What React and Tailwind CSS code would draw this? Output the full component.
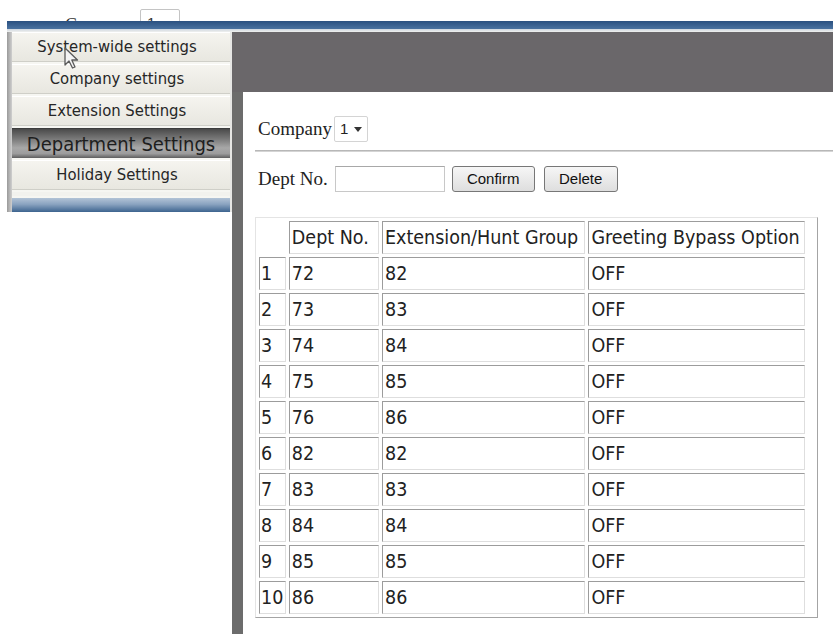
import React from "react";

const menuItems = [
  { label: "System-wide settings" },
  { label: "Company settings" },
  { label: "Extension Settings" },
  { label: "Department Settings", active: true },
  { label: "Holiday Settings" },
];

const rows = [
  [1, 72, 82],
  [2, 73, 83],
  [3, 74, 84],
  [4, 75, 85],
  [5, 76, 86],
  [6, 82, 82],
  [7, 83, 83],
  [8, 84, 84],
  [9, 85, 85],
  [10, 86, 86],
];

const cell =
  "h-[33px] border border-t-[#9c9c9c] border-l-[#9c9c9c] border-r-[#dedede] border-b-[#dedede] pl-[2px] text-left align-middle font-normal whitespace-nowrap";

function Cursor() {
  return (
    <svg
      className="absolute left-[64px] top-[47px]"
      width="17"
      height="23"
      viewBox="0 0 17 23"
    >
      <path
        d="M1 1 L1 18 L5 14 L8.5 21 L11 20 L7.8 13 L13.5 13 Z"
        fill="#f4f4f4"
        stroke="#5a5a5a"
        strokeWidth="1.3"
        strokeLinejoin="round"
      />
    </svg>
  );
}

export default function App() {
  return (
    <div className="relative w-[833px] h-[634px] overflow-hidden bg-white text-[#222]">
      {/* page behind the frame, mostly covered */}
      <div className="h-[21px] overflow-hidden flex items-start">
        <div className="ml-[65px] mt-[15px] font-['Liberation_Serif',serif] text-[18px] leading-[20px] text-[#333]">
          Company
        </div>
        <div className="ml-[5px] mt-[9px] w-[40px] h-[22px] border border-[#c4c4c4] rounded-[2px] pl-[6px] pt-[3px] font-['Liberation_Sans',sans-serif] text-[15px] leading-[20px] text-[#333]">
          1
        </div>
      </div>

      {/* title bar */}
      <div className="ml-[7px] h-[8px] bg-[linear-gradient(to_bottom,#2a5080,#4a72a0)]" />
      <div className="ml-[7px] h-[3px] bg-[linear-gradient(to_bottom,#cdd6e0,#f0f0ee)]" />

      <div className="flex">
        {/* side menu */}
        <div className="ml-[7px] w-[225px] flex flex-col self-start">
          <div className="flex">
            <div className="w-[5px] bg-[linear-gradient(to_right,#9a9a9a,#cfcfcf)]" />
            <div className="w-[218px] flex flex-col gap-[2px] bg-[#f6f6f2] font-['DejaVu_Sans_Condensed','DejaVu_Sans',sans-serif]">
              {menuItems.map((m) =>
                m.active ? (
                  <div
                    key={m.label}
                    className="h-[30px] flex items-center justify-center text-[20px] text-[#1e1e1e] bg-[linear-gradient(to_bottom,#4a4a4a,#7a7a7a_35%,#a8a8a8_65%,#9c9c9c_85%,#5e5e5e)] border-t border-[#3c3c3c]"
                  >
                    {m.label}
                  </div>
                ) : (
                  <div
                    key={m.label}
                    className="h-[30px] flex items-center justify-center pr-[8px] text-[16.5px] text-[#262626] bg-[linear-gradient(to_bottom,#f5f4ef,#e8e7e0)] border-t border-t-white border-b border-b-[#cfcfc8]"
                  >
                    {m.label}
                  </div>
                )
              )}
              <div className="h-[4px] bg-[#f2f2ee]" />
              <div className="h-[14px] bg-[linear-gradient(to_bottom,#b2c3d6,#8aa3c0_45%,#3d648f)]" />
            </div>
            <div className="w-[2px] bg-[#e6e6e4]" />
          </div>
        </div>

        {/* main frame */}
        <div className="flex-1 flex flex-col h-[602px]">
          <div className="h-[60px] bg-[#6a676a]" />
          <div className="flex-1 flex">
            <div className="w-[11px] bg-[#6c6c6c]" />
            <div className="flex-1 pl-[12px] pt-[24px]">
              <div className="flex items-center h-[26px] font-['Liberation_Serif',serif] text-[19px] text-[#222] pl-[3px]">
                <span>Company</span>
                <div className="ml-[2px] flex items-center h-[26px] w-[34px] border border-[#d4d4d4] rounded-[2px] bg-white pl-[5px] gap-[6px] font-['Liberation_Sans',sans-serif] text-[15px]">
                  <span>1</span>
                  <svg width="8" height="5" viewBox="0 0 8 5">
                    <path d="M0 0 L8 0 L4 5 Z" fill="#333" />
                  </svg>
                </div>
              </div>
              <div className="mt-[8px] h-[2px] bg-[linear-gradient(to_bottom,#a9a9a9,#e2e2e2)]" />

              <div className="mt-[13px] flex items-center h-[28px] pl-[3px] font-['Liberation_Serif',serif] text-[19px]">
                <span>Dept No.</span>
                <div className="ml-[7px] w-[110px] h-[26px] border border-[#c8c8c8] border-t-[#a8a8a8] bg-white" />
                <button className="ml-[7px] h-[26px] w-[83px] rounded-[3px] border border-[#777] bg-[linear-gradient(to_bottom,#f6f6f6,#dedede)] font-['Liberation_Sans',sans-serif] text-[15px] text-[#111]">
                  Confirm
                </button>
                <button className="ml-[9px] h-[26px] w-[74px] rounded-[3px] border border-[#777] bg-[linear-gradient(to_bottom,#f6f6f6,#dedede)] font-['Liberation_Sans',sans-serif] text-[15px] text-[#111]">
                  Delete
                </button>
              </div>

              <div className="mt-[24px] w-[563px] border border-t-[#e4e4e4] border-l-[#e4e4e4] border-r-[#a4a4a4] border-b-[#a4a4a4] pr-[9px]">
                <table className="table-fixed border-separate border-spacing-[3px] font-['DejaVu_Sans_Condensed','DejaVu_Sans',sans-serif] text-[19.5px] leading-[22px] text-[#222]">
                  <thead>
                    <tr>
                      <th className="w-[27px] h-[33px]" />
                      <th className={`${cell} w-[91px]`}>Dept No.</th>
                      <th className={`${cell} w-[204px]`}>Extension/Hunt Group</th>
                      <th className={`${cell} w-[217px]`}>Greeting Bypass Option</th>
                    </tr>
                  </thead>
                  <tbody>
                    {rows.map(([n, d, e]) => (
                      <tr key={n}>
                        <td className={`${cell} pl-px`}>{n}</td>
                        <td className={cell}>{d}</td>
                        <td className={cell}>{e}</td>
                        <td className={cell}>OFF</td>
                      </tr>
                    ))}
                  </tbody>
                </table>
              </div>
            </div>
          </div>
        </div>
      </div>

      <Cursor />
    </div>
  );
}
